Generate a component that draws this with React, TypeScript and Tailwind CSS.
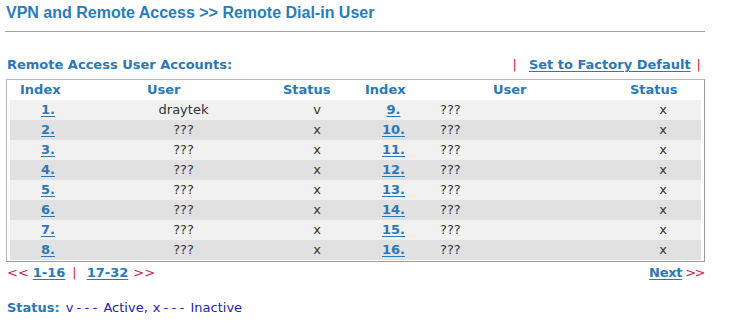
const rows = [
  { a: "1.", au: "draytek", as: "v", b: "9.", bu: "???", bs: "x" },
  { a: "2.", au: "???", as: "x", b: "10.", bu: "???", bs: "x" },
  { a: "3.", au: "???", as: "x", b: "11.", bu: "???", bs: "x" },
  { a: "4.", au: "???", as: "x", b: "12.", bu: "???", bs: "x" },
  { a: "5.", au: "???", as: "x", b: "13.", bu: "???", bs: "x" },
  { a: "6.", au: "???", as: "x", b: "14.", bu: "???", bs: "x" },
  { a: "7.", au: "???", as: "x", b: "15.", bu: "???", bs: "x" },
  { a: "8.", au: "???", as: "x", b: "16.", bu: "???", bs: "x" },
];

const link = "font-bold text-[#2b78b6] underline underline-offset-2";

export default function App() {
  return (
    <div className="w-[732px] h-[335px] bg-white font-['DejaVu_Sans',Verdana,sans-serif] text-[13px] text-[#333]">
      <div className="h-[31px] pl-[6px] pt-[4px] font-['Liberation_Sans',Arial,sans-serif] text-[16px] leading-[18px] font-bold text-[#2a7cba]">
        VPN and Remote Access &gt;&gt; Remote Dial-in User
      </div>
      <div className="ml-[5px] w-[700px] h-px bg-[#a5a5a5]" />

      <div className="ml-[6px] w-[699px]">
        <div className="mt-[25px] flex items-center justify-between leading-[16px]">
          <span className="pl-px font-bold text-[#2b78b6]">Remote Access User Accounts:</span>
          <span className="flex items-center pr-[4px]">
            <span className="text-[#d4204a]">|</span>
            <a className={`${link} ml-[12px] mr-[6px]`}>Set to Factory Default</a>
            <span className="text-[#d4204a]">|</span>
          </span>
        </div>

        <div className="mt-[6px] border border-[#9a9a9a] border-l-[#b8b8b8] border-t-[#b8b8b8] px-[3px] pb-px">
          <div className="grid grid-cols-[127px_136px_82px_128px_137px_80px] pl-[10px] h-[20px] leading-[20px] font-bold text-[#2b78b6]">
            <span>Index</span>
            <span>User</span>
            <span>Status</span>
            <span>Index</span>
            <span>User</span>
            <span>Status</span>
          </div>
          {rows.map((r, i) => (
            <div
              key={r.a}
              className={`grid grid-cols-[76px_195px_72px_81px_192px_74px] h-[20px] leading-[20px] ${
                i % 2 === 0 ? "bg-[#f1f1f1]" : "bg-[#e1e1e1]"
              }`}
            >
              <span className="text-center"><a className={link}>{r.a}</a></span>
              <span className="text-center">{r.au}</span>
              <span className="text-center">{r.as}</span>
              <span className="text-center"><a className={link}>{r.b}</a></span>
              <span className="pl-[6px]">{r.bu}</span>
              <span className="text-center">{r.bs}</span>
            </div>
          ))}
        </div>

        <div className="mt-[3px] flex items-center justify-between leading-[16px]">
          <span className="flex items-center pl-px">
            <span className="text-[#d4204a]">&lt;&lt;</span>
            <a className={`${link} ml-[4px]`}>1-16</a>
            <span className="text-[#d4204a] ml-[7px]">|</span>
            <a className={`${link} ml-[10px]`}>17-32</a>
            <span className="text-[#d4204a] ml-[5px]">&gt;&gt;</span>
          </span>
          <span className="flex items-center">
            <a className={`${link} tracking-[-0.3px]`}>Next</a>
            <span className="text-[#d4204a] ml-[3px] mr-px tracking-[-1.5px]">&gt;&gt;</span>
          </span>
        </div>

        <div className="mt-[19px] pl-px leading-[16px] flex items-center">
          <span className="font-bold text-[#2b78b6]">Status:</span>
          <span className="flex items-center text-[#2424a8]">
            <span className="ml-[6px]">v</span>
            <span className="ml-[3px] tracking-[3.3px]">---</span>
            <span className="ml-[3px]">Active,</span>
            <span className="ml-[5px]">x</span>
            <span className="ml-[3px] tracking-[3.3px]">---</span>
            <span className="ml-[3px]">Inactive</span>
          </span>
        </div>
      </div>
    </div>
  );
}
